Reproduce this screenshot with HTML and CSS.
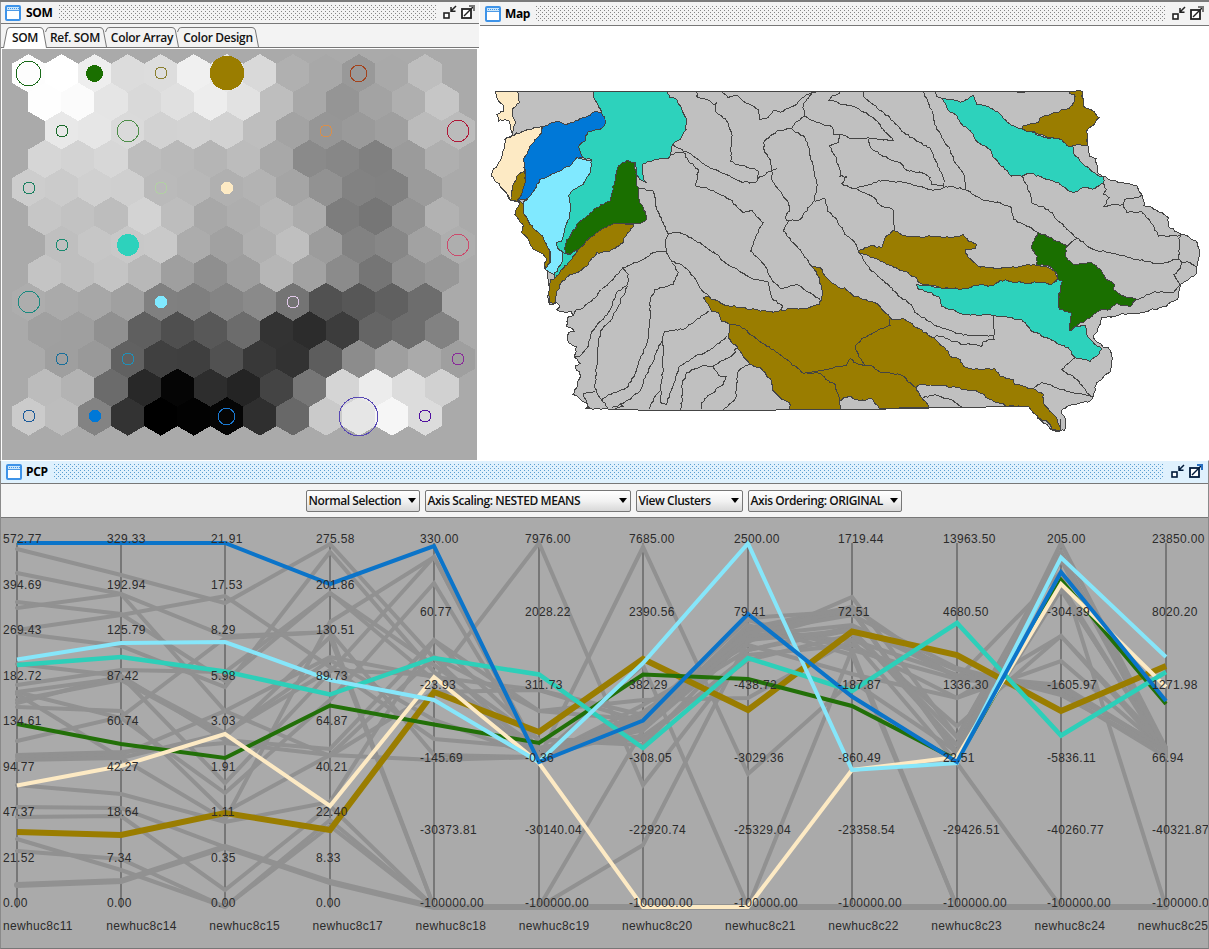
FILE: index.html
```html
<!DOCTYPE html>
<html lang="en">
<head>
<meta charset="utf-8">
<title>SOM, Map, PCP</title>
<link rel="stylesheet" href="styles.css">
</head>
<body>
<svg class="defs" width="0" height="0">
  <symbol id="win" viewBox="0 0 16 16">
    <rect x="1" y="1" width="14" height="14" rx="1" fill="#fff" stroke="#3e93e8" stroke-width="2"/>
    <path d="M2 2h12v3.5H2z" fill="#c9e6fb"/>
    <path d="M2 5.500h12" stroke="#4f9be6" stroke-width="1"/>
    <path d="M3 3.5h11" stroke="#3e93e8" stroke-dasharray="1 1"/>
  </symbol>
  <symbol id="min" viewBox="0 0 14 14">
    <rect x="1" y="8" width="5" height="5" fill="#fff" stroke="currentColor" stroke-width="1.6"/>
    <path d="M13 1L8.5 5.5M8 2v4.2h4.5" fill="none" stroke="currentColor" stroke-width="1.5"/>
  </symbol>
  <symbol id="ext" viewBox="0 0 14 14">
    <rect x="1" y="4" width="9" height="9" fill="#fff" stroke="currentColor" stroke-width="1.8"/>
    <path d="M3 11L12 2" fill="none" stroke="currentColor" stroke-width="1.5"/>
    <path d="M8 1h5v5" fill="none" stroke="var(--tip)" stroke-width="2"/>
  </symbol>
</svg>
<div class="desktop">
  <div class="upper">
    <section class="frame som">
      <header class="title"><svg class="wicon"><use href="#win"/></svg><span class="name">SOM</span><i class="grip"></i><svg class="tool"><use href="#min"/></svg><svg class="tool"><use href="#ext"/></svg></header>
      <nav class="tabs">
        <div class="tab first"><svg class="edge" viewBox="0 0 44 21" preserveAspectRatio="none"><path d="M.5 21L4 3Q4.600 .5 7 .5H37Q39.500 .5 40.300 3L43.500 21" fill="#fff" stroke="#777"/></svg><span>SOM</span></div>
        <div class="tab second"><svg class="edge" viewBox="0 0 62 20" preserveAspectRatio="none"><path d="M.5 5L2 1.500Q3 .5 5 .5H55Q57.500 .5 58.300 3L61.500 20" fill="#f3f3f3" stroke="#777"/></svg><span>Ref. SOM</span></div>
        <div class="tab third"><svg class="edge" viewBox="0 0 74 20" preserveAspectRatio="none"><path d="M.5 5L2 1.500Q3 .5 5 .5H67Q69.500 .5 70.300 3L73.500 20" fill="#f3f3f3" stroke="#777"/></svg><span>Color Array</span></div>
        <div class="tab fourth"><svg class="edge" viewBox="0 0 82 20" preserveAspectRatio="none"><path d="M.5 5L2 1.500Q3 .5 5 .5H75Q77.500 .5 78.300 3L81.500 20" fill="#f3f3f3" stroke="#777"/></svg><span>Color Design</span></div>
      </nav>
      <svg id="som" class="somview" viewBox="2 49 475 411" shape-rendering="crispEdges"></svg>
    </section>
    <section class="frame map">
      <header class="title"><svg class="wicon"><use href="#win"/></svg><span class="name">Map</span><i class="grip"></i><svg class="tool"><use href="#min"/></svg><svg class="tool"><use href="#ext"/></svg></header>
      <svg id="map" class="mapview" viewBox="480 26.600 729 434" shape-rendering="crispEdges"></svg>
    </section>
  </div>
  <section class="frame pcp">
    <header class="title"><svg class="wicon"><use href="#win"/></svg><span class="name">PCP</span><i class="grip"></i><svg class="tool"><use href="#min"/></svg><svg class="tool"><use href="#ext"/></svg></header>
    <div class="bar">
      <div class="combo c1"><span>Normal Selection</span><b></b></div>
      <div class="combo c2"><span>Axis Scaling: NESTED MEANS</span><b></b></div>
      <div class="combo c3"><span>View Clusters</span><b></b></div>
      <div class="combo c4"><span>Axis Ordering: ORIGINAL</span><b></b></div>
    </div>
    <svg id="pcp" class="pcpview" viewBox="1 518 1207 430"></svg>
  </section>
</div>
<script src="app.js"></script>
</body>
</html>
```
FILE: styles.css
```css
body { margin: 0; background: #fff; overflow: hidden; }
.defs { position: absolute; }
.desktop { width: 1209px; height: 949px; display: flex; flex-direction: column; box-sizing: border-box; border-top: 2px solid #7b7b7b; font: 600 12px "Open Sans", "Noto Sans", sans-serif; color: #111; overflow: hidden; }
.upper { display: flex; height: 458px; }
.frame { display: flex; flex-direction: column; box-sizing: border-box; }
.som { width: 480px; border-left: 1px solid #999; padding-right: 1px; background: #fff; }
.map { width: 729px; }
.pcp { height: 489px; border-left: 1px solid #8a8a8a; border-right: 1px solid #8a8a8a; border-top: 1px solid #fff; border-bottom: 1px solid #777; }
.title { display: flex; align-items: center; height: 21px; flex: none; background: #f3f3f3; border-bottom: 1px solid #777; padding-left: 4px; --tip: #777; --dot: #858585; color: #222; }
.map .title { height: 23px; padding-left: 5px; }
.pcp .title { background: #dff1fd; --tip: #2a70c0; --dot: #5a9ed0; height: 22px; padding-left: 5px; color: #001a3a; }
.wicon { width: 16px; height: 16px; margin-right: 4px; flex: none; }
.som .wicon { margin-right: 5px; }
.name { font-weight: 700; color: #000; letter-spacing: -.35px; width: 33px; line-height: 20px; }
.pcp .name { width: 28px; }
.map .name { width: 31px; }
.grip { flex: 1; height: 16px; background: conic-gradient(from 270deg at 1px 1px, var(--dot) 90deg, transparent 0) 0 0/4px 4px, conic-gradient(from 270deg at 1px 1px, var(--dot) 90deg, transparent 0) 2px 2px/4px 4px; }
.tool { width: 14px; height: 14px; margin-left: 4px; flex: none; margin-top: -2px; }
.grip + .tool { margin-left: 7px; }
.som .title { padding-right: 4px; }
.map .title { padding-right: 5px; }
.pcp .title { padding-right: 5px; }
.tabs { display: flex; align-items: flex-end; height: 23px; padding-left: 2px; background: #f3f3f3; border-bottom: 1px solid #777; flex: none; }
.tab { position: relative; height: 20px; display: flex; justify-content: center; align-items: center; margin-left: -2px; letter-spacing: -.3px; white-space: nowrap; }
.tab span { position: relative; }
.edge { position: absolute; left: 0; top: 0; width: 100%; height: 100%; }
.first { width: 44px; height: 21px; margin-left: 0; z-index: 2; margin-bottom: -1px; }
.second { width: 62px; }
.second span { left: -1px; }
.third { width: 74px; }
.fourth { width: 82px; }
.somview { width: 475px; height: 411px; margin: 1px 0 0 1px; background: #aaa; flex: none; }
.mapview { width: 729px; height: 434px; flex: none; }
.bar { display: flex; justify-content: center; align-items: center; gap: 5px; height: 33px; padding-right: 2px; background: #f4f4f4; border-bottom: 1px solid #777; flex: none; }
.combo { display: flex; align-items: center; justify-content: space-between; height: 22px; box-sizing: border-box; border: 1px solid #777; border-radius: 2px; background: linear-gradient(#fff, #f2f2f2 50%, #d8d8d8); padding: 0 3px 0 2px; white-space: nowrap; letter-spacing: -.42px; }
.combo b { border: 4.500px solid transparent; border-top: 5px solid #000; border-bottom: 0; margin-top: -1px; }
.c1 { width: 114px; }
.c2 { width: 206px; }
.c3 { width: 107px; }
.c4 { width: 154px; }
.pcpview { width: 1207px; height: 430px; background: #aaa; flex: none; }
.lab { font: 12px "Liberation Sans", Arial, sans-serif; letter-spacing: .33px; fill: #2b2b2b; }
.axis { stroke: #777; stroke-width: 2; }
.bg { fill: none; stroke: #919191; stroke-width: 4; stroke-linecap: round; }
.ln { fill: none; stroke-width: 4; }
.county { fill: none; stroke: #444; stroke-width: 1; }
```
FILE: app.js
```js
const NS = 'http://www.w3.org/2000/svg';
function add(parent, tag, attrs, text) {
  const n = document.createElementNS(NS, tag);
  for (const k in attrs) n.setAttribute(k, attrs[k]);
  if (text) n.textContent = text;
  parent.appendChild(n);
}

/* SOM hexagons: one row of grey levels per line, shifts repeat every four rows */
const som = document.getElementById('som');
const greys = [
  'fd ff ee dc dd f0 e8 d9 b0 a8 99 a9 be', 'fe fb e5 d9 e0 ed e2 be a8 95 a3 af c6',
  'e8 e6 da d2 d3 d2 be a3 96 9a 9f bb bb', 'd6 d3 d7 bd b9 b5 bc a8 8a 87 80 9b af',
  'cd cb d0 cf ba b8 b0 b3 a5 92 82 81 9b', 'c6 c2 bd d3 bd a8 ae b7 ac 7d 76 93 b2',
  'bf c6 c8 c9 ac a1 b0 bf 9c 82 87 a2 ae', 'c4 bf c4 b8 9f 8f 9e b6 a2 8b 75 90 98',
  'ad aa a7 a0 80 7f 84 8a 74 51 57 60 6d', 'a0 9f 90 5f 4f 58 6c 33 2c 3c 65 6d 82',
  '9f 99 61 40 3f 51 38 32 5d 8c 9f aa 9f', 'bc b3 6b 28 05 2d 24 44 77 d5 ec dc d1',
  'cb bd 83 33 00 02 05 2f 68 ca e6 f6 dc'];
greys.forEach((row, r) => row.split(' ').forEach((g, c) => {
  const x = 28.6 + [0, 16.5, 33, 16.5][r % 4] + c * 33.05, y = 73.4 + r * 28.58;
  const p = [[0, -19.3], [16.8, -9.5], [16.8, 9.5], [0, 19.3], [-16.8, 9.5], [-16.8, -9.5]];
  add(som, 'polygon', { points: p.map(q => (x + q[0]).toFixed(1) + ',' + (y + q[1]).toFixed(1)).join(' '), fill: '#' + g + g + g });
}));
[[28.5, 73.5, 12.3, '#1a6b1a'], [94.5, 73.5, 8.5, '#1a6f00', 1], [161, 73, 6, '#8b8030'], [227, 73, 17.2, '#9a7d00', 1], [358.500, 73.5, 8.3, '#a3431d'],
 [62, 131, 6, '#1a6b2a'], [128, 131, 10.8, '#4f8f4a'], [326, 131, 6, '#d68f4e'], [458, 131, 10.8, '#b01838'],
 [29, 188, 6, '#1a8060'], [161, 188, 6, '#b2cfa4'], [227, 188, 6.2, '#fdeac4', 1],
 [62, 245, 6, '#1a8a70'], [128, 245, 11, '#2dd2bc', 1], [458, 245, 10.8, '#cc4a6c'],
 [29, 302, 10.8, '#1a8a80'], [161, 302, 6.2, '#80e9ff', 1], [293, 302, 6, '#e0c8e8'],
 [62, 359, 6, '#1a6f9a'], [128, 359, 6, '#2090b8'], [458, 359, 6, '#8a2a9a'],
 [29, 416, 6, '#1a5a9a'], [95, 416, 6.2, '#0078d7', 1], [226.500, 416.5, 8.3, '#1a78d0'], [358.500, 416.500, 19.3, '#5848b4'], [425, 416, 6, '#5010a0']
].forEach(([x, y, r, c, f]) => add(som, 'circle', { cx: x, cy: y, r, fill: f ? c : 'none', stroke: f ? 'none' : c, 'stroke-width': 1 }));

/* Watershed map: points are in thirds of a pixel, relative to the sheet named by the letter */
const map = document.getElementById('map');
const sheet = { a: [480, 80], b: [700, 80], c: [950, 80], d: [540, 260], e: [830, 260] };
function noise(a, b) {
  const s = Math.sin(a * 12.9898 + b * 78.233) * 43758.5453;
  return s - Math.floor(s) - .5;
}
function trace(spec, close) {
  let o = sheet.a, pts = [];
  spec.trim().split(/\s+/).forEach(t => {
    if (sheet[t]) { o = sheet[t]; return; }
    const [x, y] = t.split(',').map(Number);
    pts.push([o[0] + x / 3, o[1] + y / 3]);
  });
  if (close) pts.push(pts[0]);
  let out = [pts[0]];
  for (let i = 1; i < pts.length; i++) {
    const [x0, y0] = pts[i - 1], [x1, y1] = pts[i], L = Math.hypot(x1 - x0, y1 - y0);
    const n = Math.abs(y1 - y0) < L * .03 && L > 20 ? 1 : Math.max(1, Math.round(L / 2.6));
    const flip = x0 > x1 ? -1 : 1;
    for (let k = 1; k < n; k++) {
      const x = x0 + (x1 - x0) * k / n, y = y0 + (y1 - y0) * k / n, j = noise(Math.round(x * 3), Math.round(y * 3)) * 1.7 * flip;
      out.push([x - (y1 - y0) / L * j, y + (x1 - x0) / L * j]);
    }
    out.push([x1, y1]);
  }
  return 'M' + out.map(p => p[0].toFixed(1) + ' ' + p[1].toFixed(1)).join('L') + (close ? 'Z' : '');
}
const area = (c, s) => add(map, 'path', { d: trace(s, true), fill: c, stroke: '#444', 'stroke-width': 1 });
const border = s => add(map, 'path', { d: trace(s), class: 'county' });
const O = '#9a7d00', T = '#2dd2bc', G = '#1a6f00', W = '#fdeac4';
area('#c0c0c0', 'a 45,36 c 397,36 400,58 402,82 425,92 448,115 430,138 410,155 413,195 418,230 438,238 443,265 445,283 480,302 560,318 578,350 582,378 620,392 655,415 655,440 690,462 740,485 748,520 738,585 690,615 685,655 650,680 600,692 560,702 510,705 480,715 e 855,172 815,175 807,200 790,235 818,262 835,265 845,290 842,335 800,370 790,412 780,425 720,438 693,455 706,478 704,512 685,517 668,512 630,480 608,458 597,442 430,443 240,447 120,450 0,451 d 750,451 615,454 465,454 215,451 135,448 147,446 140,430 98,405 112,380 120,345 105,320 120,312 102,290 110,262 85,250 85,220 102,215 90,205 78,200 85,170 100,168 95,155 75,158 50,150 60,140 50,130 30,135 22,110 30,90 25,68 a 205,570 192,560 200,540 190,525 160,510 145,480 125,460 130,440 105,405 120,370 90,362 82,345 60,320 35,290 38,275 60,245 72,210 75,180 97,165 90,125 75,120 55,125 50,105 70,95 68,75 50,55');
[ 'a 578,195 610,215 635,225 660,245 685,262 720,278 b 90,290 125,308 165,310 180,292 230,268',
  'a 572,225 610,218 625,245 655,270 648,320 680,325 720,345 b 90,360 130,400 155,392 190,430 170,465 152,515 195,560 215,600 245,628 290,615 330,640 360,660',
  'a 470,325 520,335 530,385 550,430 565,465 590,458 620,468 660,490 700,520 b 40,515 70,545 125,580 165,600 205,608 215,655 248,680 245,692',
  'a 565,465 555,490 558,515 520,520 480,545 430,565 400,600 370,625 335,665 300,690 d 110,150 100,168',
  'a 558,515 575,545 610,560 640,590 660,625 690,655',
  'a 575,550 595,580 580,615 525,630 510,660 d 330,180 325,230 320,255 300,300 285,345 260,385 220,400 185,420',
  'd 245,22 265,45 262,75 230,100 205,160 165,205 150,230 145,260 120,290 105,292',
  'd 262,80 235,140 215,180 180,215 175,260 170,320 165,385 170,400 205,445',
  'd 165,395 130,402 148,445',
  'd 368,240 350,275 335,315 315,355 300,395 270,420 240,435 215,445',
  'd 505,155 460,190 430,210 375,215 368,240 370,330 362,380 362,430 378,435 388,405 408,360 415,325 460,295 520,265 560,230',
  'd 360,395 335,430 330,450', 'd 420,450 428,425 425,380 440,340 490,318 520,320 580,285 590,265',
  'd 520,320 535,348 558,352 550,375 510,405 485,430 485,450', 'd 630,312 595,335 590,390 585,420 550,450', 'd 240,432 250,440 225,450',
  'a 650,36 650,52 680,60 705,75 b 50,70 45,95 80,125 95,160 92,245 120,258 165,268 175,275 170,308',
  'b 65,36 85,55 110,48 130,65 175,90 180,120 205,115 220,92 240,98 290,75 320,45 350,36',
  'b 340,36 320,60 308,85 315,110 350,130 395,140 400,165 420,165 460,178 505,175 580,183 550,150 520,115 470,85 430,75 388,62 395,50 420,40',
  'b 315,110 285,130 275,148 230,155 190,190 195,220 210,240 215,265 215,300 235,330 265,370 268,395 255,415 265,425 300,420 330,380 345,355 352,315 340,270 330,220 315,175 275,148',
  'b 265,425 250,455 290,500 325,545 335,560', 'b 345,365 375,358 382,395 410,420 435,465 465,490 475,515 e 120,30 175,75 205,110 245,135 255,160 320,200 400,227 490,230',
  'e 490,168 492,240 460,245 455,262 430,255 400,255 320,228 310,240',
  'b 420,165 415,190 388,200 405,230 418,265 420,290 440,292 425,312 460,328 500,318 550,302 620,310 700,333 730,325 c 0,320 45,330 95,360 150,370 185,385 190,420 230,440 265,460',
  'b 470,328 515,350 545,380 578,390 585,450', 'b 490,36 490,50 545,95 570,115 605,155 650,185 690,205 705,240 730,295 732,325',
  'b 505,178 512,205 545,228 600,250 620,272 665,280 690,295 695,315 730,318',
  'b 670,36 685,70 700,105 703,135 730,180 750,210 760,240 c 30,268 45,295 45,330', 'b 703,36 710,50 728,60',
  'c 215,290 240,340 245,370 295,390 325,425 380,475 430,510 480,520 560,540 625,553 685,538 690,462', 'c 380,478 350,502',
  'c 460,312 470,330 460,345 478,355 462,380 520,375 525,360 580,350', 'c 520,375 530,400 575,395 600,425 625,470 690,468',
  'c 685,538 695,550 720,550 738,562', 'c 695,550 690,568 672,585 690,615', 'c 690,612 670,640 610,638 560,662', 'c 200,36 205,40 222,40 226,36',
  'e 735,295 695,330 740,360 770,400 790,412', 'e 612,385 635,368 680,385 740,402 785,412', 'e 278,415 315,405 360,420 395,442'
].forEach(border);
area(W, 'a 45,36 112,36 118,70 100,85 98,105 107,130 97,165 90,125 75,120 55,125 50,105 70,95 68,75 50,55');
area(W, 'a 97,168 130,155 185,140 185,160 165,180 150,200 140,225 130,240 135,272 115,285 100,315 92,362 82,345 60,320 35,290 38,275 60,245 72,210 75,180');
area(O, 'a 120,365 130,372 130,400 150,435 170,455 190,475 210,515 210,550 200,565 192,560 200,540 190,525 160,510 145,480 125,460 130,440 105,405');
area(T, 'a 340,36 560,36 570,55 590,60 605,90 618,115 618,150 600,180 578,195 572,220 568,235 540,238 490,252 488,285 497,308 480,300 470,280 465,250 440,243 415,260 405,290 400,330 390,365 350,385 320,410 295,430 275,460 258,490 255,520 270,525 295,505 285,525 265,550 245,570 225,597 220,585 245,550 250,520 235,510 230,490 245,485 255,445 268,410 272,375 265,350 275,335 310,315 330,280 335,242 310,235 295,202 315,185 325,155 360,150 372,140 375,120 365,102 350,70 342,55');
area('#0078d7', 'a 188,142 235,125 260,135 300,118 330,108 345,97 365,102 375,120 372,140 360,150 325,155 315,185 295,202 310,235 290,235 275,255 240,275 180,300 165,330 145,355 110,365 125,345 135,310 135,272 130,240 140,225 150,200 165,180 185,160');
area(O, 'a 135,272 135,310 125,345 110,365 92,362 100,315 115,285');
area('#80e9ff', 'a 290,235 310,240 335,242 330,280 310,315 275,335 265,350 272,375 268,410 255,445 245,485 230,490 235,510 250,520 245,550 222,587 205,575 195,568 210,550 210,515 190,475 170,455 150,435 130,400 130,370 145,355 165,330 180,300 240,275 275,255');
area(O, 'a 400,433 462,435 450,455 432,475 430,490 390,515 350,520 325,555 300,575 265,590 240,615 228,650 228,668 210,670 205,640 212,600 225,597 245,570 265,550 285,525 300,505 330,475 365,450');
area(G, 'a 440,243 465,250 468,300 475,340 480,370 490,385 500,420 480,433 400,433 365,450 330,475 300,505 270,525 255,522 258,490 275,460 295,430 320,410 350,385 390,365 400,330 405,290 415,260');
area(T, 'c -22,57 0,60 30,68 55,58 70,48 80,75 115,80 155,108 185,138 215,148 290,175 335,180 350,198 370,203 370,220 400,255 440,285 460,293 460,312 435,328 400,325 370,340 345,325 325,308 280,297 245,282 215,290 185,290 165,270 130,235 120,210 85,190 65,160 35,135 15,105 -5,92');
area(O, 'c 358,36 397,36 400,82 425,92 448,115 430,138 410,155 413,198 375,197 365,200 350,198 335,180 290,172 215,148 220,138 265,130 270,115 310,100 358,88 375,65 372,45 358,42');
area(T, 'b 650,615 700,622 780,628 c 40,628 80,618 130,618 150,602 230,612 270,608 305,615 322,600 338,605 335,625 325,650 330,690 e 725,162 718,195 720,215 740,200 765,197 770,225 790,250 815,268 800,290 780,306 735,295 715,265 680,252 650,235 605,215 575,180 490,168 400,165 335,140 325,110 262,87');
area(O, 'b 475,515 515,498 545,505 555,475 580,452 620,470 680,472 700,470 750,475 c 40,465 55,485 80,495 78,508 45,512 55,535 85,560 150,568 245,557 290,562 315,575 322,597 305,615 270,608 230,612 150,602 130,618 80,618 40,628 b 730,628 680,615 655,608 650,595 610,575 560,555 520,535 475,520');
area(G, 'c 265,460 285,465 320,485 350,500 345,530 370,555 425,550 455,575 465,595 495,615 490,630 515,648 560,660 540,682 500,672 480,690 455,690 430,705 e 765,185 740,200 720,215 718,195 725,162 690,150 685,120 690,90 698,65 682,60 680,40 660,22 620,15 c 262,530 245,505 255,475');
area(O, 'b 335,560 360,565 380,595 415,625 435,625 455,645 490,660 530,672 e 185,180 220,178 260,205 310,235 330,255 355,275 360,290 390,300 400,320 430,330 495,328 510,350 550,360 555,375 610,388 640,405 640,430 665,460 682,480 690,512 668,512 655,490 625,475 608,458 597,442 535,440 490,425 440,395 380,385 325,378 270,375 258,385 275,415 298,444 148,447 125,418 90,425 55,410 30,425 30,450 d 750,451 748,430 720,415 700,395 695,365 660,325 630,315 600,275 565,235 570,195 545,185 535,160 515,155 490,115 500,110 550,135 630,150 700,158 750,148 800,148 840,135 848,100 835,50');
['e 180,180 180,198 130,220 100,235 75,260 85,290 105,318', 'd 790,342 840,332 900,322 e 50,318 60,298 85,315 130,322 150,338 210,345 240,370 258,385',
 'd 570,195 600,200 640,230 680,260 740,300 790,342 840,342 e 0,370 15,375 30,425', 'e 692,480 690,512'].forEach(border);

/* Parallel coordinate plot */
const pcp = document.getElementById('pcp');
const ax = [17, 121, 225, 330, 434, 539, 643, 748, 852, 957, 1061, 1166];
const line = (ys, attrs) => add(pcp, 'polyline', { points: ys.map((y, i) => ax[i] + ',' + y).join(' '), ...attrs });
ax.forEach(x => add(pcp, 'line', { x1: x, x2: x, y1: 543, y2: 908, class: 'axis' }));
[
  [549, 575, 603, 544, 658, 757, 730, 640, 610, 755, 590, 752],
  [573, 594, 636, 632, 755, 757, 715, 650, 630, 745, 560, 755],
  [602, 614, 681, 593, 665, 740, 745, 636, 640, 675, 685, 750],
  [608, 594, 711, 657, 677, 690, 722, 628, 607, 679, 690, 748],
  [630, 615, 596, 667, 739, 748, 736, 660, 635, 726, 636, 747],
  [633, 646, 687, 552, 672, 758, 547, 774, 681, 752, 585, 754],
  [664, 676, 783, 672, 557, 758, 705, 645, 674, 698, 661, 751],
  [685, 670, 672, 593, 680, 543, 785, 650, 627, 670, 693, 757],
  [692, 718, 793, 700, 583, 757, 712, 642, 597, 737, 552, 756],
  [694, 758, 820, 622, 557, 755, 725, 625, 655, 907, 907, 907],
  [703, 676, 740, 749, 640, 740, 740, 655, 645, 698, 636, 753],
  [707, 711, 812, 755, 657, 711, 700, 698, 640, 763, 907, 907],
  [741, 717, 638, 632, 907, 907, 730, 630, 611, 752, 588, 755],
  [755, 752, 743, 755, 760, 757, 665, 907, 907, 907, 907, 907],
  [757, 755, 711, 756, 692, 690, 715, 620, 650, 907, 907, 907],
  [760, 758, 733, 670, 675, 748, 728, 636, 625, 676, 688, 749],
  [785, 794, 822, 802, 640, 711, 720, 618, 611, 755, 543, 748],
  [807, 808, 847, 882, 907, 907, 845, 640, 630, 737, 555, 750],
  [817, 816, 890, 806, 907, 907, 907, 907, 907, 907, 907, 907],
  [839, 870, 907, 826, 907, 907, 907, 907, 907, 907, 907, 907],
  [851, 859, 907, 820, 907, 907, 907, 907, 907, 907, 907, 907],
  [700, 680, 737, 637, 907, 907, 907, 907, 650, 679, 572, 907],
  [692, 678, 733, 660, 720, 757, 718, 633, 615, 668, 695, 752]
].forEach(ys => line(ys, { class: 'bg' }));
line([885, 881, 847, 882, 907, 907, 907, 907, 907, 907, 907, 907], { class: 'bg', style: 'stroke-width:6' });
[
  ['#9a7d00', 6, [832, 835, 813, 830, 692, 732, 659, 710, 631.5, 655, 711, 666]],
  ['#227008', 4, [724, 744, 758, 705.5, 724.5, 743, 674.5, 679, 706, 760, 580, 704]],
  ['#fdeac4', 4, [785.5, 766, 734, 806, 677, 763, 907, 907, 770, 757, 584, 687]],
  ['#2dcfb9', 4.5, [665, 657, 671.5, 694.5, 658, 674.5, 748, 658, 691, 623, 735.5, 672]],
  ['#86e6fa', 4, [659.5, 643, 642, 680, 700, 762, 663, 543.5, 770, 763, 557.5, 657]],
  ['#0b74c9', 4, [543, 543, 543, 584, 546, 762, 720.5, 614, 696.5, 762, 572, 701]]
].forEach(([c, w, ys]) => line(ys, { class: 'ln', stroke: c, style: 'stroke-width:' + w }));
const labels = [
  '572.77 394.69 269.43 182.72 134.61 94.77 47.37 21.52 0.00', '329.33 192.94 125.79 87.42 60.74 42.27 18.64 7.34 0.00',
  '21.91 17.53 8.29 5.98 3.03 1.91 1.11 0.35 0.00', '275.58 201.86 130.51 89.73 64.87 40.21 22.40 8.33 0.00',
  '330.00 60.77 -23.93 -145.69 -30373.81 -100000.00', '7976.00 2028.22 311.73 -0.36 -30140.04 -100000.00',
  '7685.00 2390.56 382.29 -308.05 -22920.74 -100000.00', '2500.00 79.41 -438.72 -3029.36 -25329.04 -100000.00',
  '1719.44 72.51 -187.87 -860.49 -23358.54 -100000.00', '13963.50 4680.50 1336.30 22.51 -29426.51 -100000.00',
  '205.00 -304.39 -1605.97 -5836.11 -40260.77 -100000.00', '23850.00 8020.20 1271.98 66.94 -40321.87 -100000.00'];
labels.forEach((s, i) => {
  const v = s.split(' ');
  v.forEach((t, k) => add(pcp, 'text', { x: ax[i] - 14, y: Math.round(543 + k * 364.3 / (v.length - 1)), class: 'lab' }, t));
  add(pcp, 'text', { x: 3 + i * 103.15, y: 930, class: 'lab' }, 'newhuc8c' + [11, 14, 15, 17, 18, 19, 20, 21, 22, 23, 24, 25][i]);
});
```
